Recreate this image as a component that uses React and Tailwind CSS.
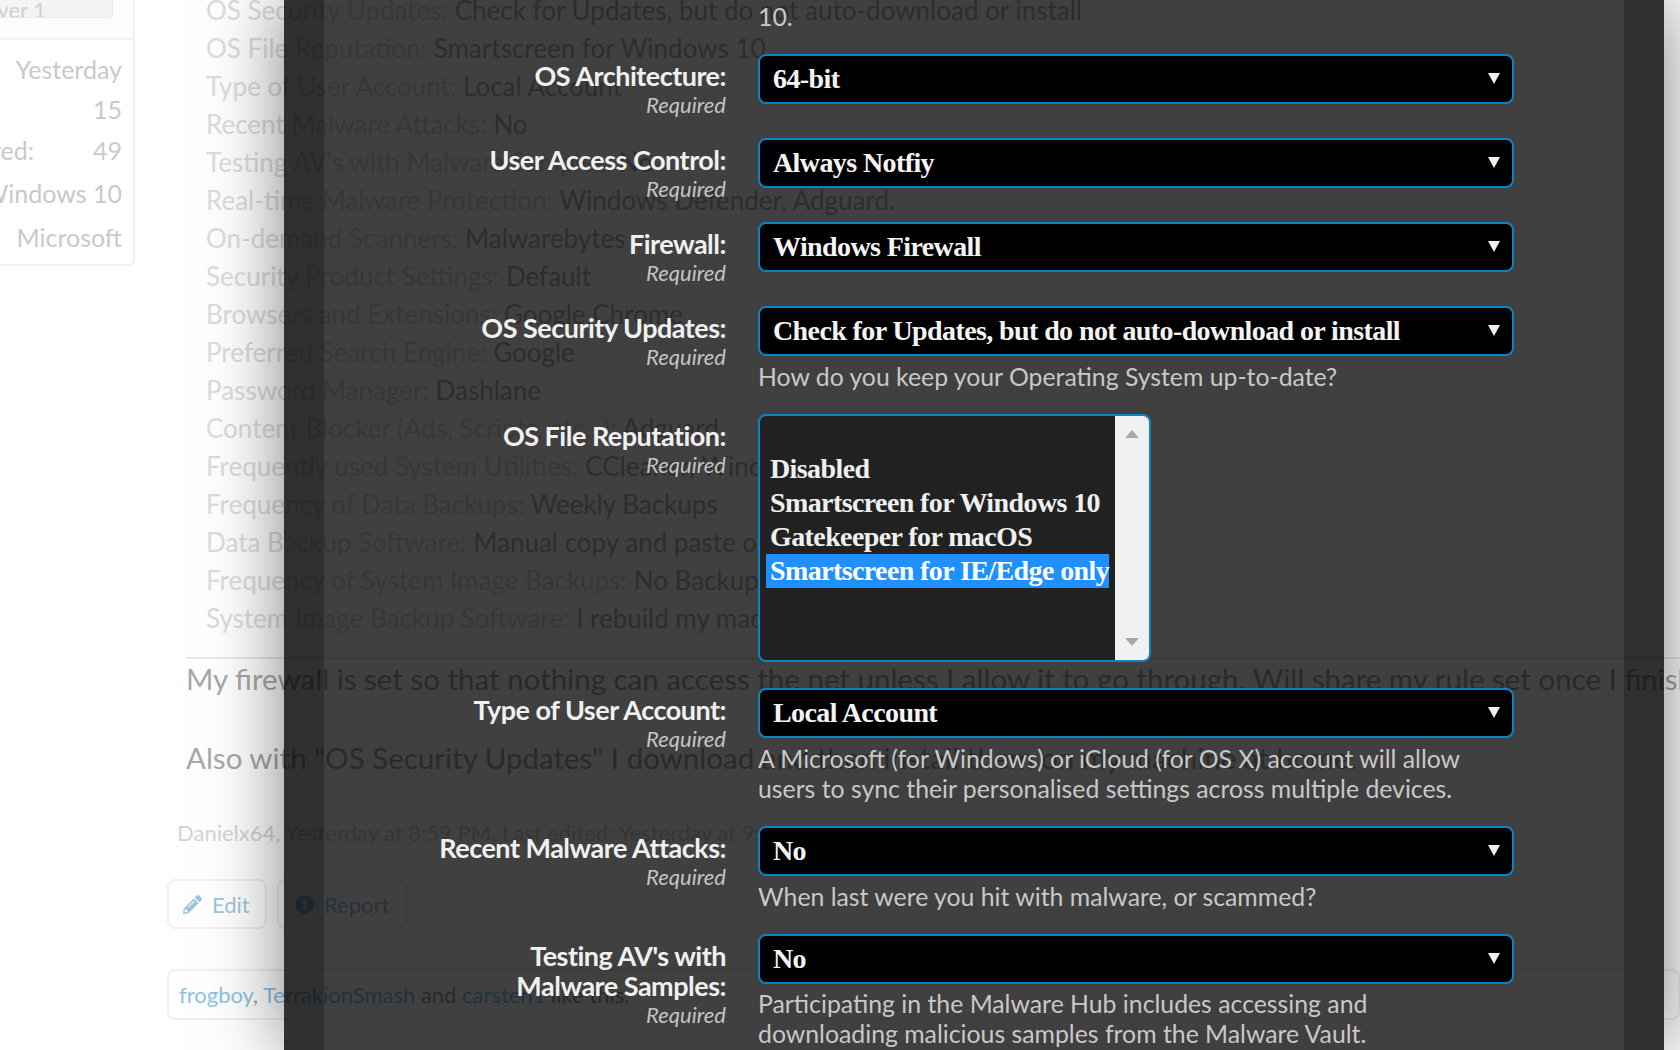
import React from 'react';
import { FaPencilAlt, FaExclamationCircle } from 'react-icons/fa';

const specs = [
  ['OS Security Updates:', 'Check for Updates, but do not auto-download or install'],
  ['OS File Reputation:', 'Smartscreen for Windows 10'],
  ['Type of User Account:', 'Local Account'],
  ['Recent Malware Attacks:', 'No'],
  ["Testing AV's with Malware Samples:", 'No'],
  ['Real-time Malware Protection:', 'Windows Defender, Adguard.'],
  ['On-demand Scanners:', 'Malwarebytes'],
  ['Security Product Settings:', 'Default'],
  ['Browsers and Extensions:', 'Google Chrome'],
  ['Preferred Search Engine:', 'Google'],
  ['Password Manager:', 'Dashlane'],
  ['Content Blocker (Ads, Scripts, etc...):', 'Adguard'],
  ['Frequently used System Utilities:', 'CCleaner, Windows Disk Cleanup, Backup10'],
  ['Frequency of Data Backups:', 'Weekly Backups'],
  ['Data Backup Software:', 'Manual copy and paste of files'],
  ['Frequency of System Image Backups:', 'No Backups'],
  ['System Image Backup Software:', 'I rebuild my machine from scratch every time.'],
];

const Sidebar = () => (
  <div className="w-[135px] shrink-0 text-[25px] text-[#c9c9c9]">
    <div className="h-[40px] border-r-2 border-b-2 border-[#f1f1f1] bg-[#fcfcfc] pr-5">
      <div className="flex h-[18px] items-end justify-end overflow-hidden whitespace-nowrap rounded-br border-r border-b border-[#e8e8e8] bg-[#f4f4f4] pr-[66px] text-[22px] leading-[14px] text-[#cfcfcf]">ver 1</div>
    </div>
    <div className="h-[226px] rounded-br-md border-r-2 border-b-2 border-[#f1f1f1] pr-[11px] pt-[9px]">
      <div className="flex h-[40px] items-center justify-end leading-[40px]">Yesterday</div>
      <div className="flex h-[40px] items-center justify-end leading-[40px]">15</div>
      <div className="flex h-[41px] items-center justify-between leading-[40px]"><span className="-ml-2">red:</span><span>49</span></div>
      <div className="flex h-[45px] items-center justify-end overflow-hidden whitespace-nowrap leading-[44px]">Windows 10</div>
      <div className="flex h-[44px] items-center justify-end leading-[44px]">Microsoft</div>
    </div>
  </div>
);

const Post = () => (
  <div className="-mt-[9px] ml-[51px] min-w-0 flex-1 whitespace-nowrap">
    <div className="ml-[20px] text-[26px] leading-[38px]">
      {specs.map(([label, value]) => (
        <div key={label}>
          <span className="text-[#dcdcdc]">{label} </span>
          <span className="text-[#b4b4b4]">{value}</span>
        </div>
      ))}
    </div>
    <div className="mt-[20px] border-t-2 border-[#e8e8e8] text-[29.5px] leading-[40px] text-[#a8a8a8]">
      <p>My firewall is set so that nothing can access the net unless I allow it to go through. Will share my rule set once I finish it.</p>
      <p className="mt-[39px]">Also with "OS Security Updates" I download and then install them on my machine at home.</p>
    </div>
    <p className="-ml-[9px] mt-[39px] text-[22px] leading-[32px] text-[#d4d4d4]">Danielx64, Yesterday at 8:59 PM, Last edited: Yesterday at 9:01 PM</p>
    <div className="-ml-[19px] mt-[30px] flex gap-[10px] text-[22px] text-[#9cc6de]">
      <div className="flex h-[50px] w-[100px] items-center gap-[10px] rounded-lg border-2 border-[#f0f0f0] pl-[14px]">
        <FaPencilAlt className="text-[19px]" />
        <span>Edit</span>
      </div>
      <div className="flex h-[50px] w-[130px] items-center gap-[10px] rounded-lg border-2 border-[#f0f0f0] pl-[16px]">
        <FaExclamationCircle className="text-[19px]" />
        <span>Report</span>
      </div>
    </div>
    <div className="-ml-[19px] mt-[40px] h-[51px] rounded-lg border-2 border-[#f0f0f0] pl-[10px] text-[22px] leading-[47px] text-[#a0a0a0]">
      <span className="text-[#8ec2e0]">frogboy</span>, <span className="text-[#8ec2e0]">TerrakionSmash</span> and <span className="text-[#8ec2e0]">carsten1</span> like this.
    </div>
  </div>
);

const Arrow = ({ down = true, className = '' }) => (
  <svg viewBox="0 0 12 11" preserveAspectRatio="none" className={className}>
    <path d={down ? 'M0 0H12L6 11Z' : 'M0 11H12L6 0Z'} fill="currentColor" />
  </svg>
);

// label column is pinned to the field height, "Required" hangs below into the gap
const Row = ({ label, lines, children, className = '' }) => (
  <div className={`flex ${className}`}>
    <div className="h-[50px] w-[402px] shrink-0 pt-[7px] text-right">
      <div className="text-[27px] font-bold leading-[30px] tracking-[-0.5px] text-[#f0f0f0]">
        {label}
        {lines && <br />}
        {lines}
      </div>
      <div className="text-[22px] italic leading-[28px] text-[#c4c4c4]">Required</div>
    </div>
    <div className="ml-[32px] w-[756px] shrink-0">{children}</div>
  </div>
);

const Dropdown = ({ value }) => (
  <div className="flex h-[50px] items-center justify-between rounded-lg border-2 border-[#0a84c6] bg-black pl-[13px] pr-[12px] font-['Liberation_Serif',serif] text-[28px] font-bold tracking-[-0.6px] text-[#f4f4f4]">
    <span>{value}</span>
    <Arrow className="mb-[2px] h-[11px] w-[12px] text-[#f0f0f0]" />
  </div>
);

const Hint = ({ children, className = '' }) => (
  <p className={`max-w-[720px] text-[24.8px] leading-[30px] text-[#c8c8c8] ${className}`}>{children}</p>
);

const ListBox = () => (
  <div className="flex h-[248px] w-[393px] overflow-hidden rounded-lg border-2 border-[#0a84c6] bg-[#222222] font-['Liberation_Serif',serif] text-[28px] font-bold leading-[34px] tracking-[-0.6px] text-[#f0f0f0]">
    <div className="min-w-0 flex-1 px-[6px] pt-[2px]">
      <div className="h-[34px]"></div>
      <div className="h-[34px] pl-1">Disabled</div>
      <div className="h-[34px] whitespace-nowrap pl-1">Smartscreen for Windows 10</div>
      <div className="h-[34px] pl-1">Gatekeeper for macOS</div>
      <div className="h-[34px] whitespace-nowrap bg-[#1e90ff] pl-1 text-white">Smartscreen for IE/Edge only</div>
    </div>
    <div className="flex w-[34px] shrink-0 flex-col items-center justify-between bg-[#f1f1f1] py-[14px] text-[#a8a8a8]">
      <Arrow down={false} className="h-[8px] w-[14px]" />
      <Arrow className="h-[8px] w-[14px]" />
    </div>
  </div>
);

const Overlay = () => (
  <div className="absolute bottom-0 left-[284px] right-[16px] top-0 overflow-hidden border-x-[40px] border-black/[.81] bg-black/75 bg-clip-padding pt-[2px] shadow-[0_0_70px_rgba(0,0,0,0.5)]">
    <div className="ml-[434px]">
      <Hint>10.</Hint>
    </div>
    <Row label="OS Architecture:" className="mt-[22px]"><Dropdown value="64-bit" /></Row>
    <Row label="User Access Control:" className="pt-[34px]"><Dropdown value="Always Notfiy" /></Row>
    <Row label="Firewall:" className="pt-[34px]"><Dropdown value="Windows Firewall" /></Row>
    <Row label="OS Security Updates:" className="pt-[34px]">
      <Dropdown value="Check for Updates, but do not auto-download or install" />
      <Hint className="mt-[6px]">How do you keep your Operating System up-to-date?</Hint>
    </Row>
    <Row label="OS File Reputation:" className="pt-[22px]"><ListBox /></Row>
    <Row label="Type of User Account:" className="pt-[26px]">
      <Dropdown value="Local Account" />
      <Hint className="mt-[6px]">A Microsoft (for Windows) or iCloud (for OS X) account will allow users to sync their personalised settings across multiple devices.</Hint>
    </Row>
    <Row label="Recent Malware Attacks:" className="pt-[22px]">
      <Dropdown value="No" />
      <Hint className="mt-[6px]">When last were you hit with malware, or scammed?</Hint>
    </Row>
    <Row label="Testing AV's with" lines="Malware Samples:" className="pt-[22px]">
      <Dropdown value="No" />
      <Hint className="mt-[5px]">Participating in the Malware Hub includes accessing and downloading malicious samples from the Malware Vault.</Hint>
    </Row>
  </div>
);

const App = () => {
  return (
    <div className="relative flex h-[1050px] overflow-hidden bg-white font-['Lato',sans-serif]">
      <Sidebar />
      <Post />
      <Overlay />
    </div>
  );
};

export default App;
